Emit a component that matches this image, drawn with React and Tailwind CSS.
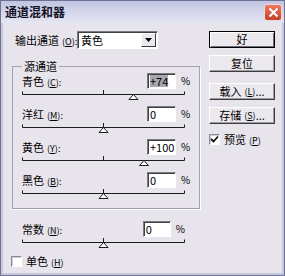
const font = { fontFamily: '"Noto Sans CJK SC", "Liberation Sans", sans-serif' };

const Slider = ({ value }) => {
  const x = 81.5 + (value / 200) * 81;
  return (
    <svg width="163" height="11" className="block">
      <path d="M0.5 2.5V5.5H162.5V2.5" fill="none" stroke="#1c1c1c" />
      <path d="M81.5 1V5" stroke="#1c1c1c" />
      <polygon points={`${x},5.5 ${x - 4.5},10.5 ${x + 4.5},10.5`} fill="#fff" stroke="#1c1c1c" />
    </svg>
  );
};

const Key = ({ k, colon = true }) => (
  <span className="text-[9px] ml-[3px]">
    (<u>{k}</u>){colon ? ':' : ''}
  </span>
);

const Field = ({ value, selected }) => (
  <div className="w-[29px] h-[16px] bg-white border border-t-[#7c7a84] border-l-[#7c7a84] border-r-white border-b-white shadow-[inset_1px_1px_0_#404040] flex items-center pl-[2px]">
    <span className={`text-[11px] leading-[12px] text-black ${selected ? 'bg-[#a8a6ae]' : ''}`}>{value}</span>
  </div>
);

const Row = ({ label, k, value, selected }) => (
  <div className="flex items-center h-[16px]">
    <span className="w-[125px] whitespace-nowrap text-[11px] leading-none text-black">
      {label}
      <Key k={k} />
    </span>
    <Field value={value} selected={selected} />
    <span className="ml-[5px] text-[10px] leading-none text-black">%</span>
  </div>
);

const Button = ({ children, main }) => (
  <div
    className={`h-[17px] w-[66px] flex items-center justify-center whitespace-nowrap text-[11px] leading-none text-black bg-[#ebe8ee] border ${
      main
        ? 'border-black shadow-[inset_1px_1px_0_#fff,inset_-1px_-1px_0_#6e6c76]'
        : 'border-t-white border-l-white border-r-[#3c3c3c] border-b-[#3c3c3c] shadow-[inset_-1px_-1px_0_#9e9ba6]'
    }`}
  >
    {children}
  </div>
);

const Check = ({ checked }) => (
  <div className="w-[11px] h-[11px] bg-white border border-t-[#8a8892] border-l-[#8a8892] border-r-white border-b-white shadow-[inset_1px_1px_0_#d0ced6] flex items-center justify-center">
    {checked && (
      <svg width="9" height="9" viewBox="0 0 9 9">
        <path d="M1 4L3.5 6.5L8 1.5" fill="none" stroke="#111" strokeWidth="1.8" />
      </svg>
    )}
  </div>
);

export default function App() {
  return (
    <div style={font} className="w-[285px] h-[276px] flex flex-col border border-[#6f7391] bg-[#e8e4ec]">
      {/* title bar */}
      <div className="h-[22px] flex items-center justify-between pl-[4px] pr-[2px] bg-gradient-to-b from-[#c2c5e2] to-[#e6e6f2]">
        <span className="text-[12px] font-bold leading-none text-[#141428]">通道混和器</span>
        <div className="w-[18px] h-[17px] rounded-[3px] border border-[#f4d8d0] bg-gradient-to-b from-[#e97a5e] to-[#c4402c] flex items-center justify-center">
          <svg width="11" height="11" viewBox="0 0 11 11">
            <path d="M1.5 1.5L9.5 9.5M9.5 1.5L1.5 9.5" stroke="#fff" strokeWidth="2" />
          </svg>
        </div>
      </div>

      {/* body */}
      <div className="flex-1 flex border-x-2 border-b-2 border-[#c6c6de] pl-[7px] pt-[8px]">
        <div className="w-[185px] flex flex-col">
          <div className="flex items-center h-[18px]">
            <span className="ml-[5px] w-[62px] whitespace-nowrap text-[11px] leading-none text-black">
              输出通道
              <Key k="O" />
            </span>
            <div className="w-[81px] h-[18px] bg-white border border-t-[#7c7a84] border-l-[#7c7a84] border-r-white border-b-white shadow-[inset_1px_1px_0_#404040] flex items-center">
              <span className="flex-1 pl-[3px] text-[11px] leading-none text-black">黄色</span>
              <div className="w-[15px] h-[14px] mr-[1px] bg-[#ebe8ee] border border-t-white border-l-white border-r-[#3c3c3c] border-b-[#3c3c3c] flex items-center justify-center">
                <svg width="7" height="4" viewBox="0 0 7 4">
                  <path d="M0 0H7L3.5 4Z" fill="#000" />
                </svg>
              </div>
            </div>
          </div>

          <fieldset className="mt-[12px] ml-[2px] w-[183px] border border-[#a5a1b0] shadow-[1px_1px_0_#fff] px-[9px] pt-[2px] pb-[9px]">
            <legend className="px-[2px] text-[11px] leading-[10px] text-black">源通道</legend>
            <Row label="青色" k="C" value="+74" selected />
            <Slider value={74} />
            <div className="mt-[6px]" />
            <Row label="洋红" k="M" value="0" />
            <Slider value={0} />
            <div className="mt-[6px]" />
            <Row label="黄色" k="Y" value="+100" />
            <Slider value={100} />
            <div className="mt-[6px]" />
            <Row label="黑色" k="B" value="0" />
            <Slider value={0} />
          </fieldset>

          <div className="mt-[12px] ml-[12px] w-[163px]">
            <Row label="常数" k="N" value="0" />
            <Slider value={0} />
          </div>

          <div className="mt-[8px] ml-[1px] flex items-center gap-[4px]">
            <Check />
            <span className="whitespace-nowrap text-[11px] leading-none text-black">
              单色
              <Key k="H" colon={false} />
            </span>
          </div>
        </div>

        <div className="ml-[14px] flex flex-col">
          <Button main>好</Button>
          <div className="mt-[7px]"><Button>复位</Button></div>
          <div className="mt-[11px]"><Button>载入<Key k="L" colon={false} />...</Button></div>
          <div className="mt-[7px]"><Button>存储<Key k="S" colon={false} />...</Button></div>
          <div className="mt-[10px] flex items-center gap-[4px]">
            <Check checked />
            <span className="whitespace-nowrap text-[11px] leading-none text-black">
              预览
              <Key k="P" colon={false} />
            </span>
          </div>
        </div>
      </div>
    </div>
  );
}
